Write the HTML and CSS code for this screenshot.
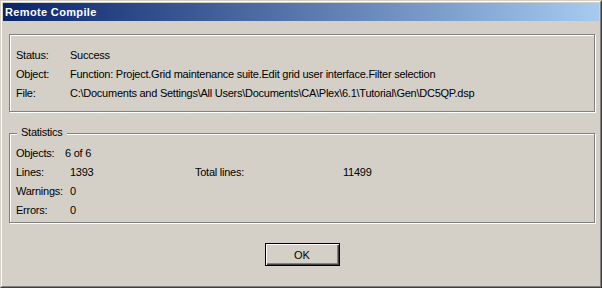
FILE: index.html
```html
<!DOCTYPE html>
<html>
<head>
<meta charset="utf-8">
<title>Remote Compile</title>
<link rel="stylesheet" href="styles.css">
</head>
<body>
<div class="window">
  <div class="window-inner">
    <div class="titlebar"><span class="title">Remote Compile</span></div>
    <div class="group group-result">
      <div class="row"><span class="label">Status:</span><span class="value">Success</span></div>
      <div class="row"><span class="label">Object:</span><span class="value">Function: Project.Grid maintenance suite.Edit grid user interface.Filter selection</span></div>
      <div class="row"><span class="label">File:</span><span class="value">C:\Documents and Settings\All Users\Documents\CA\Plex\6.1\Tutorial\Gen\DC5QP.dsp</span></div>
    </div>
    <div class="group group-stats">
      <span class="legend">Statistics</span>
      <div class="row"><span class="label label-short">Objects:</span><span class="value">6 of 6</span></div>
      <div class="row"><span class="label">Lines:</span><span class="value value-num">1393</span><span class="label label-total">Total lines:</span><span class="value">11499</span></div>
      <div class="row"><span class="label">Warnings:</span><span class="value">0</span></div>
      <div class="row"><span class="label">Errors:</span><span class="value">0</span></div>
    </div>
    <div class="actions">
      <button class="btn btn-default" type="button">OK</button>
    </div>
  </div>
</div>
</body>
</html>
```

FILE: styles.css
```css
html, body {
  margin: 0;
  padding: 0;
  background: #d4d0c8;
}

body {
  font-family: "Liberation Sans", Arial, sans-serif;
  font-size: 11px;
  letter-spacing: -0.25px;
  color: #000;
}

.window {
  width: 602px;
  height: 288px;
  box-sizing: border-box;
  border: 1px solid;
  border-color: #d4d0c8 #404040 #404040 #d4d0c8;
  background: #d4d0c8;
}

.window-inner {
  height: 100%;
  box-sizing: border-box;
  border: 1px solid;
  border-color: #ffffff #808080 #808080 #ffffff;
  padding: 1px;
  display: flex;
  flex-direction: column;
}

.titlebar {
  height: 18px;
  background: linear-gradient(to right, #0a246a, #a6caf0);
  display: flex;
  align-items: center;
  padding-left: 2px;
}

.title {
  color: #fff;
  font-weight: bold;
  font-size: 11px;
  letter-spacing: 0.35px;
}

.group {
  position: relative;
  border: 1px solid #808080;
  box-shadow: inset 1px 1px #fff, 1px 1px #fff;
  margin: 0 4px 0 6px;
  padding-left: 6px;
}

.group-result {
  margin-top: 13px;
  padding-top: 11px;
  padding-bottom: 8px;
}

.group-stats {
  margin-top: 21px;
  padding-top: 10px;
  padding-bottom: 2px;
}

.legend {
  position: absolute;
  left: 7px;
  top: -8px;
  line-height: 13px;
  padding: 0 4px;
  background: #d4d0c8;
}

.row {
  display: flex;
  height: 19px;
  line-height: 19px;
  white-space: nowrap;
}

.label {
  width: 54px;
  flex: none;
}

.label-short {
  width: 49px;
}

.value-num {
  width: 125px;
  flex: none;
}

.label-total {
  width: 148px;
}

.actions {
  display: flex;
  justify-content: center;
  margin-top: 20px;
  padding-left: 2px;
}

.btn {
  width: 75px;
  height: 23px;
  box-sizing: border-box;
  font-family: "Liberation Sans", Arial, sans-serif;
  font-size: 11px;
  letter-spacing: 0;
  color: #000;
  background: #d4d0c8;
  border: 1px solid #000;
  box-shadow: inset 1px 1px #fff, inset -1px -1px #404040, inset -2px -2px #808080;
  padding: 0;
  margin: 0;
}
```
